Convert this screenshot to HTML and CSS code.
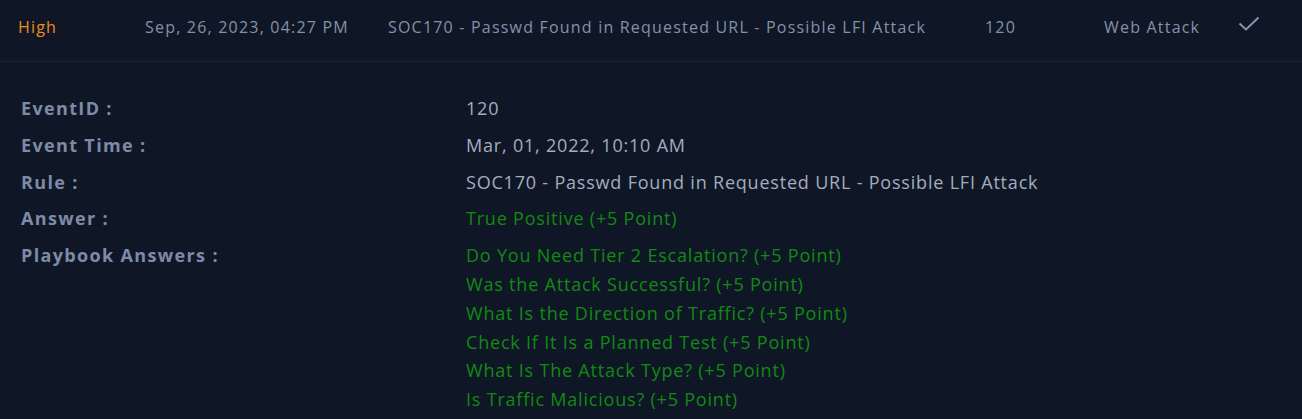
FILE: index.html
```html
<!DOCTYPE html>
<html>
<head>
<meta charset="utf-8">
<link rel="stylesheet" href="styles.css">
</head>
<body>
<div class="page">
  <div class="row">
    <span class="c-sev">High</span>
    <span class="c-date">Sep, 26, 2023, 04:27 PM</span>
    <span class="c-rule">SOC170 - Passwd Found in Requested URL - Possible LFI Attack</span>
    <span class="c-id">120</span>
    <span class="c-type">Web Attack</span>
    <span class="c-check"><svg width="22" height="18" viewBox="0 0 22 18"><path d="M1.5 9.5 L8 15.5 L20.5 3.5" fill="none" stroke="#8a94ae" stroke-width="2"/></svg></span>
  </div>
  <div class="details">
    <div class="drow"><div class="label">EventID :</div><div class="value">120</div></div>
    <div class="drow"><div class="label">Event Time :</div><div class="value">Mar, 01, 2022, 10:10 AM</div></div>
    <div class="drow"><div class="label">Rule :</div><div class="value">SOC170 - Passwd Found in Requested URL - Possible LFI Attack</div></div>
    <div class="drow"><div class="label">Answer :</div><div class="value green">True Positive (+5 Point)</div></div>
    <div class="drow"><div class="label">Playbook Answers :</div>
      <div class="value green list">
        <div>Do You Need Tier 2 Escalation? (+5 Point)</div>
        <div>Was the Attack Successful? (+5 Point)</div>
        <div>What Is the Direction of Traffic? (+5 Point)</div>
        <div>Check If It Is a Planned Test (+5 Point)</div>
        <div>What Is The Attack Type? (+5 Point)</div>
        <div>Is Traffic Malicious? (+5 Point)</div>
      </div>
    </div>
  </div>
</div>
</body>
</html>
```
FILE: styles.css
```css
html, body { margin: 0; padding: 0; background: #0f1727; }
body { font-family: "Open Sans", "Noto Sans", sans-serif; overflow: hidden; }
.page { width: 1302px; height: 419px; }
.row {
  display: flex; align-items: center; height: 53px; padding-bottom: 8px;
  border-bottom: 1px solid #1a2335;
  font-size: 16px; letter-spacing: 1.2px; color: #8591a8;
}
.c-sev { color: #f08c1c; width: 127px; padding-left: 18px; }
.c-date { width: 243px; }
.c-rule { width: 597px; }
.c-id { width: 119px; }
.c-type { width: 134px; }
.c-check { display: flex; margin-top: -8px; }
.details { padding: 32px 0 0 21px; }
.drow { display: flex; font-size: 18px; line-height: 28.8px; margin-bottom: 8px; letter-spacing: 0.8px; }
.label { width: 445px; font-weight: 700; color: #7e8aa6; letter-spacing: 1.35px; }
.value { color: #a3adbe; }
.green { color: #128a12; }
```
